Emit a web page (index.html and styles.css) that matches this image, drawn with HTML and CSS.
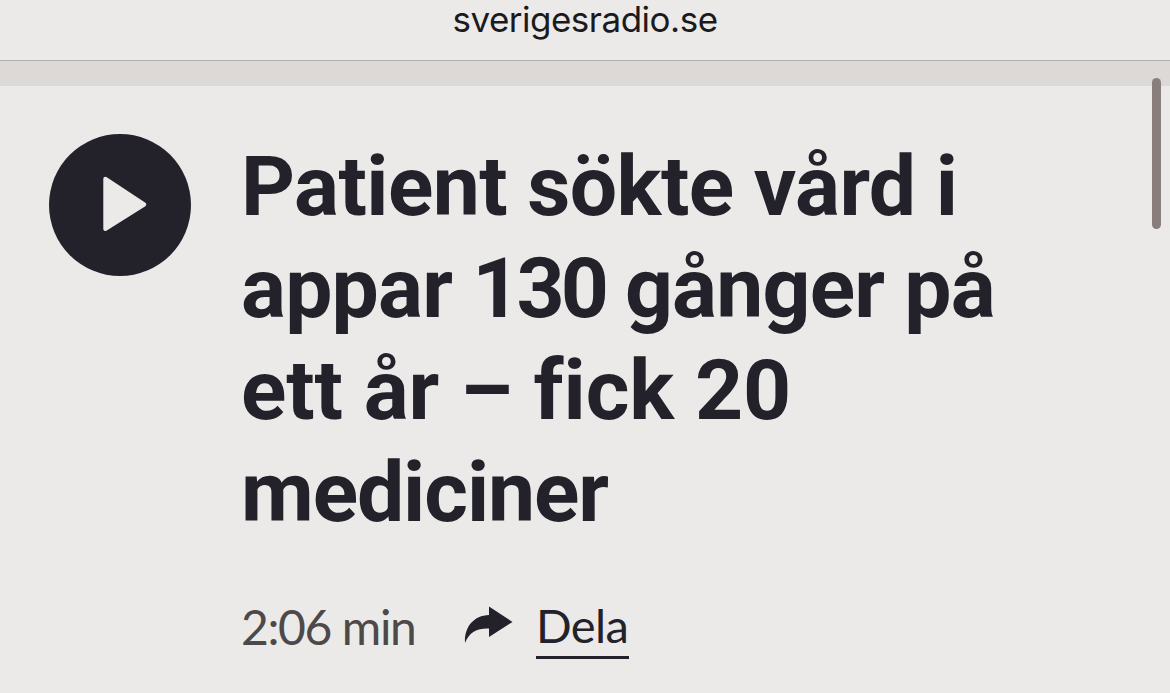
FILE: index.html
```html
<!DOCTYPE html>
<html lang="sv">
<head>
  <meta charset="UTF-8">
  <meta name="viewport" content="width=device-width, initial-scale=1.0">
  <title>Sveriges Radio</title>
  <link rel="stylesheet" href="styles.css">
</head>
<body>
  <header class="address-bar"><span class="address">sverigesradio.se</span></header>
  <div class="divider"></div>

  <main class="article">
    <button class="play-button" aria-label="Lyssna">
      <svg viewBox="0 0 142 142" width="142" height="142">
        <circle cx="71" cy="71" r="71" fill="#23222a"/>
        <path d="M56.300 44.700L95.300 70.500L56.300 95Z" fill="#ebeae8" stroke="#ebeae8" stroke-width="4" stroke-linejoin="round"/>
      </svg>
    </button>
    <div class="content">
      <h1 class="headline">
        <span class="line line-1">Patient sökte vård i</span>
        <span class="line line-2">appar <span class="number">130</span> gånger på</span>
        <span class="line line-3">ett år – fick 20</span>
        <span class="line line-4">mediciner</span>
      </h1>
      <div class="meta">
        <span class="duration">2:06 min</span>
        <svg class="share-icon" viewBox="0 0 50 40" width="50" height="40">
          <path d="M1 37C0 22 9 9.500 25 9V0.500L48.500 16L25 31V22.500C14 22 5 26 1 37Z" fill="#23222a"/>
        </svg>
        <a class="share-link" href="#"><span class="share-text">Dela</span></a>
      </div>
    </div>
  </main>
  <div class="scrollbar"></div>
</body>
</html>
```
FILE: styles.css
```css
* {
  box-sizing: border-box;
}

body {
  margin: 0;
  height: 693px;
  overflow: hidden;
  background: #ebeae8;
  color: #23222a;
  font-family: Roboto, sans-serif;
}

.address-bar {
  height: 60px;
  color: #1b1a1d;
  text-align: center;
  font-family: Inter, sans-serif;
  font-size: 35px;
  line-height: 38px;
  letter-spacing: -0.5px;
}

.divider {
  height: 26px;
  background: #ddd9d6;
  border-top: 1px solid #b5afab;
}

.article {
  display: flex;
  gap: 50px;
  padding: 48px 49px 0;
}

.play-button {
  width: 142px;
  height: 142px;
  padding: 0;
  border: 0;
  background: none;
}

.play-button svg {
  display: block;
}

.headline {
  margin: 0;
  padding-top: 2px;
  font-size: 84px;
  font-weight: 700;
  line-height: 102px;
  font-variant-ligatures: none;
}

.line {
  display: block;
  width: max-content;
  height: 102px;
  white-space: nowrap;
}

.line-1 {
  letter-spacing: -0.6px;
}

.line-2 {
  letter-spacing: -0.8px;
}

.number {
  letter-spacing: -4px;
}

.line-3 {
  letter-spacing: -0.1px;
}

.line-4 {
  letter-spacing: -1.1px;
}

.meta {
  display: flex;
  margin-top: 54px;
  font-size: 48px;
  line-height: 58px;
}

.duration {
  width: 223px;
  color: #4f4848;
  font-family: Lato, sans-serif;
  letter-spacing: -1.4px;
  white-space: nowrap;
}

.share-icon {
  margin-top: 8px;
}

.share-link {
  width: 93px;
  height: 61px;
  margin-left: 22px;
  border-bottom: 3px solid #23222a;
  color: inherit;
  font-family: Lato, sans-serif;
  font-size: 47px;
  line-height: 54px;
  letter-spacing: -0.6px;
  text-decoration: none;
}

.scrollbar {
  position: absolute;
  top: 78px;
  right: 9px;
  width: 9px;
  height: 151px;
  border-radius: 5px;
  background: #887f7c;
}
```
